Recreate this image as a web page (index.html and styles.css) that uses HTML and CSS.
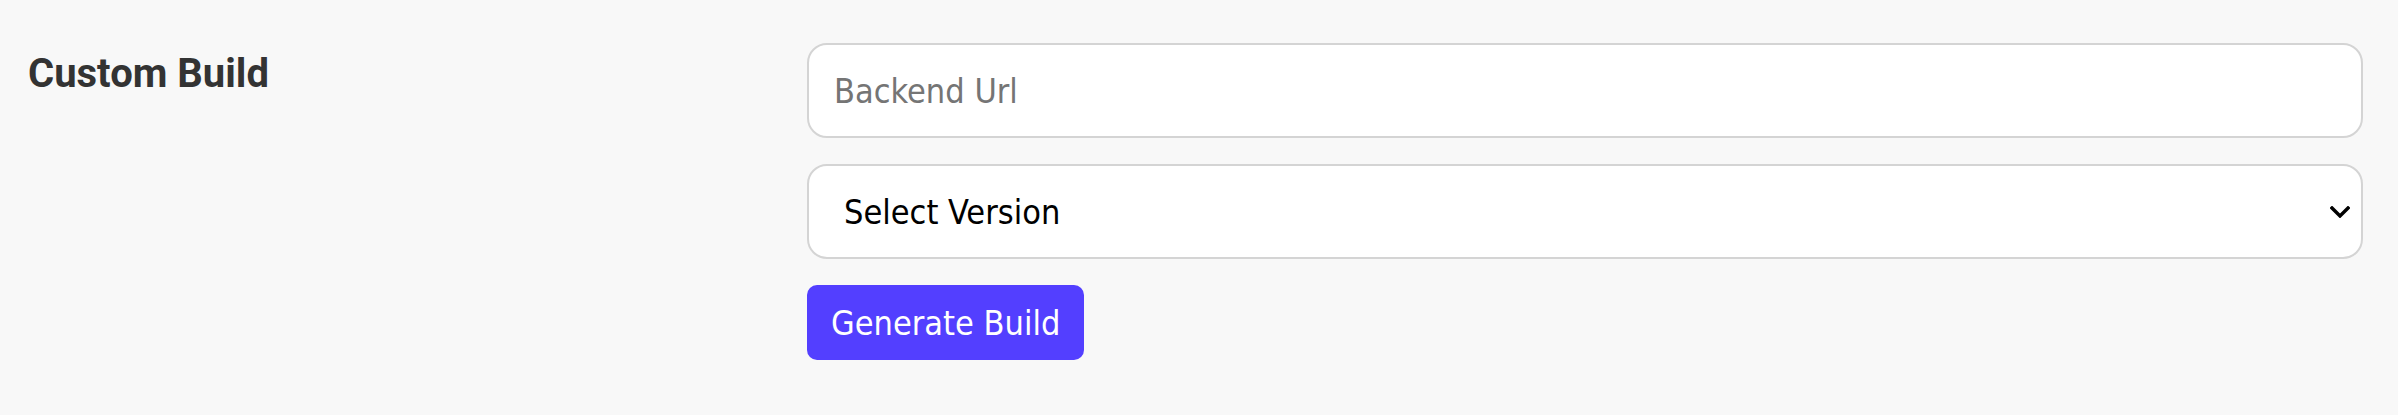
FILE: index.html
```html
<!DOCTYPE html>
<html lang="en">
<head>
<meta charset="utf-8">
<title>Custom Build</title>
<link rel="stylesheet" href="styles.css">
</head>
<body>
<section class="settings-row">
  <h2 class="row-title">Custom Build</h2>
  <form class="row-form">
    <input class="field" type="text" placeholder="Backend Url">
    <div class="select-wrap">
      <select class="field field-select">
        <option>Select Version</option>
      </select>
      <svg class="chevron" width="20" height="12" viewBox="0 0 20 12" aria-hidden="true">
        <path d="M2 2 L10 10 L18 2" fill="none" stroke="#000" stroke-width="3.4" stroke-linecap="square"/>
      </svg>
    </div>
    <div class="actions">
      <button class="btn-primary" type="button">Generate Build</button>
    </div>
  </form>
</section>
</body>
</html>
```
FILE: styles.css
```css
html, body {
  margin: 0;
  padding: 0;
  background: #f8f8f8;
}

body {
  width: 2398px;
  height: 415px;
  overflow: hidden;
}

.settings-row {
  display: grid;
  grid-template-columns: 779px 1fr;
  padding: 43px 35px 0 28px;
}

.row-title {
  margin: 7px 0 0 0;
  font-family: Roboto, "Liberation Sans", sans-serif;
  font-weight: 700;
  font-size: 40px;
  line-height: 47px;
  color: #333333;
}

.row-form {
  display: flex;
  flex-direction: column;
  gap: 26px;
  margin: 0;
}

.field {
  box-sizing: border-box;
  width: 100%;
  height: 95px;
  border: 2px solid #d4d4d4;
  border-radius: 20px;
  background: #ffffff;
  font-family: "DejaVu Sans", Verdana, sans-serif;
  font-stretch: condensed;
  font-size: 34px;
  color: #000000;
  padding: 0 25px;
  outline: none;
  margin: 0;
}

.field::placeholder {
  color: #757575;
  opacity: 1;
}

.select-wrap {
  position: relative;
}

.field-select {
  appearance: none;
  -webkit-appearance: none;
  padding-left: 35px;
}

.chevron {
  position: absolute;
  right: 13px;
  top: 42px;
  pointer-events: none;
}

.actions {
  display: flex;
}

.btn-primary {
  height: 75px;
  border: none;
  border-radius: 10px;
  background: #533fff;
  color: #ffffff;
  font-family: "DejaVu Sans", Verdana, sans-serif;
  font-stretch: condensed;
  font-size: 34px;
  padding: 0 24px;
  cursor: pointer;
}
```
